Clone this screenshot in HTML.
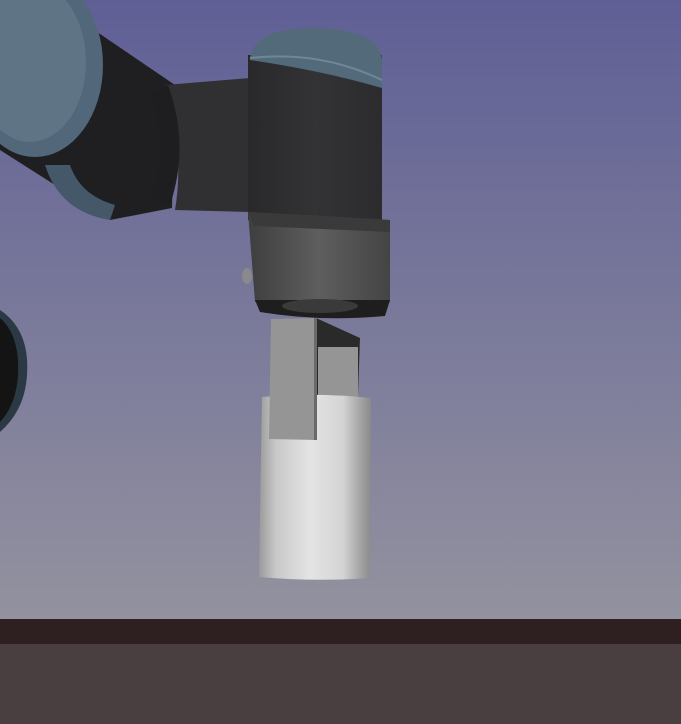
<!DOCTYPE html>
<html><head><style>html,body{margin:0;padding:0;width:681px;height:724px;overflow:hidden}</style></head><body>
<svg width="681" height="724" viewBox="0 0 681 724" xmlns="http://www.w3.org/2000/svg">
<defs>
<linearGradient id="bg" x1="0" y1="0" x2="0" y2="1">
<stop offset="0" stop-color="#5f5f96"/><stop offset="1" stop-color="#93929f"/></linearGradient>
<linearGradient id="cyl" x1="0" y1="0" x2="1" y2="0">
<stop offset="0" stop-color="#9a9a9a"/><stop offset="0.15" stop-color="#c8c8c8"/><stop offset="0.45" stop-color="#e4e4e4"/><stop offset="0.75" stop-color="#d4d4d4"/><stop offset="0.92" stop-color="#a0a0a0"/><stop offset="1" stop-color="#8a8a8a"/></linearGradient>
<linearGradient id="wr" x1="0" y1="0" x2="1" y2="0">
<stop offset="0" stop-color="#29292b"/><stop offset="0.5" stop-color="#333335"/><stop offset="1" stop-color="#2c2c2e"/></linearGradient>
<linearGradient id="cp" x1="0" y1="0" x2="1" y2="0">
<stop offset="0" stop-color="#3e3e3e"/><stop offset="0.5" stop-color="#5e5e5e"/><stop offset="1" stop-color="#444"/></linearGradient>
</defs>
<rect width="681" height="619" fill="url(#bg)"/>
<rect y="619" width="681" height="25" fill="#2e1f20"/>
<rect y="644" width="681" height="80" fill="#4a3f40"/>
<!-- upper arm -->
<path d="M50 0 L175 85 L172 208 L110 220 L0 150 L0 0 Z" fill="#1f1f21"/>
<path d="M45 165 Q60 212 110 220 L115 205 Q80 195 70 165 Z" fill="#44586a"/>
<ellipse cx="35" cy="65" rx="68" ry="92" fill="#52687a"/>
<ellipse cx="30" cy="62" rx="56" ry="80" fill="#5f7585"/>
<!-- elbow link -->
<path d="M165 85 L250 78 L250 212 L175 210 Q185 150 165 85 Z" fill="#303032"/>
<path d="M168 85 Q190 145 170 205 L150 200 Q170 145 150 95 Z" fill="#1e1e20"/>
<!-- wrist -->
<rect x="248" y="55" width="134" height="165" fill="url(#wr)"/>
<path d="M250 60 Q252 28 315 28 Q380 30 382 60 L382 88 Q320 70 250 60 Z" fill="#536a7a"/>
<path d="M250 58 Q320 50 382 80" stroke="#6f8797" stroke-width="2" fill="none"/>
<!-- coupler -->
<path d="M248 212 L390 220 L390 302 L255 302 Z" fill="url(#cp)"/>
<path d="M248 212 L390 220 L390 232 L254 226 Z" fill="#3a3a3a"/>
<path d="M255 300 L390 300 L385 316 Q320 322 260 312 Z" fill="#1e1e1e"/>
<ellipse cx="320" cy="306" rx="38" ry="7" fill="#3a3a3a"/>
<ellipse cx="247" cy="276" rx="5" ry="8" fill="#8a8a8a"/>
<!-- left disk -->
<path d="M0 310 Q30 330 27 375 Q25 410 0 432 Z" fill="#2a3944"/>
<path d="M0 318 Q20 335 18 375 Q16 405 0 422 Z" fill="#141414"/>
<!-- gripper back -->
<path d="M316 318 L360 338 L358 395 L316 395 Z" fill="#2a2a2a"/>
<rect x="318" y="347" width="40" height="50" fill="#959595"/>
<!-- cylinder -->
<path d="M262 397 Q316 392 371 398 L370 578 Q316 582 259 577 Z" fill="url(#cyl)"/>
<!-- front plate -->
<path d="M271 319 L316 318 L316 440 L269 439 Z" fill="#959595"/>
<rect x="314" y="318" width="3" height="122" fill="#6a6a6a"/>
</svg>
</body></html>
